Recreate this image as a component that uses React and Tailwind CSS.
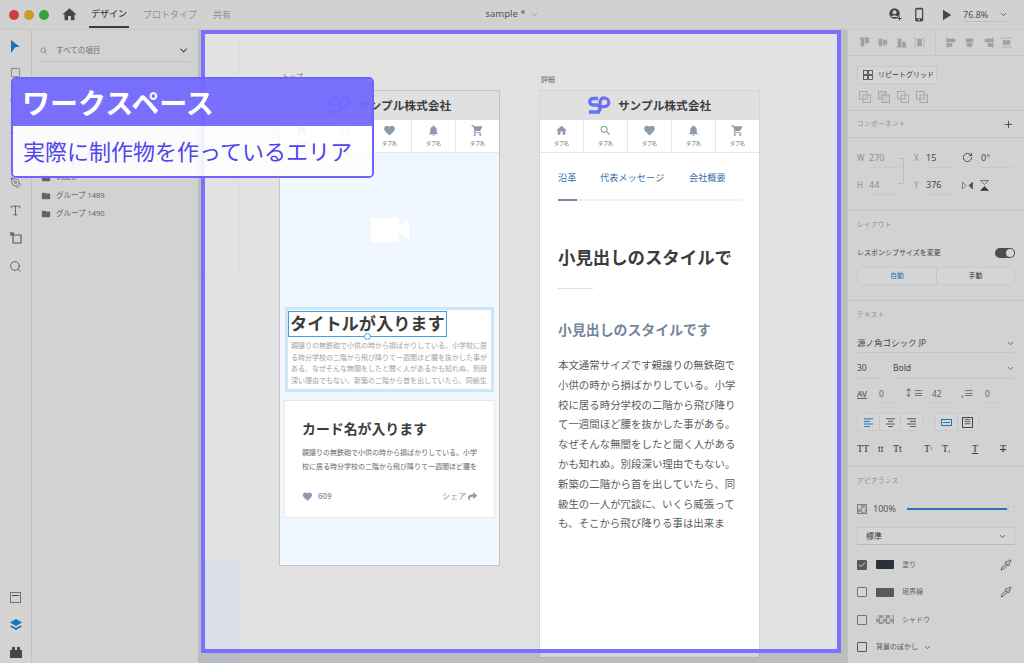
import { ChevronDown, Circle, Minus, PenTool, Plus, RotateCw, Search, Square, Triangle, Type, Pipette, Check } from "lucide-react";
import { MdFavorite, MdFolder, MdHome, MdNotifications, MdPhoneIphone, MdPlayArrow, MdSearch, MdShoppingCart } from "react-icons/md";
import { FaShare } from "react-icons/fa";

const tabIcons = [MdHome, MdSearch, MdFavorite, MdNotifications, MdShoppingCart];
const folders = ["繰り返しグリッド（カードのリスト）", "Video", "グループ 1489", "グループ 1490"];
const detailBody = [
  "本文通常サイズです親譲りの無鉄砲で",
  "小供の時から損ばかりしている。小学",
  "校に居る時分学校の二階から飛び降り",
  "て一週間ほど腰を抜かした事がある。",
  "なぜそんな無闇をしたと聞く人がある",
  "かも知れぬ。別段深い理由でもない。",
  "新築の二階から首を出していたら、同",
  "級生の一人が冗談に、いくら威張って",
  "も、そこから飛び降りる事は出来ま",
];

function Logo() {
  return (
    <svg width="23" height="19" viewBox="0 0 23 19" fill="none">
      <path d="M10 2.5H5a3 3 0 0 0 0 6.5h3.5a3 3 0 0 1 0 7H1" stroke="#5f78f2" strokeWidth="3.4" />
      <path d="M12 13V6a4 4 0 0 1 4.5-4a4.2 4.2 0 0 1 0 8.6H13" stroke="#6d6cf6" strokeWidth="3.2" />
      <path d="M9 17.5l3-2v2z" fill="#5f78f2" />
    </svg>
  );
}

function CompanyHeader() {
  return (
    <div className="h-[29px] bg-[#e0e0e0] flex items-center justify-center gap-[7px]">
      <Logo />
      <span className="text-[11.7px] font-bold text-[#3e3e3e]">サンプル株式会社</span>
    </div>
  );
}

function TabBar() {
  return (
    <div className="h-[33px] flex border-b border-[#e6e6e6]">
      {tabIcons.map((Icon, i) => (
        <div key={i} className="flex-1 flex flex-col items-center pt-[4px] border-r border-[#e6e6e6] last:border-r-0">
          <Icon size={13} className="text-[#8d9bae]" />
          <span className="text-[5px] leading-[8px] mt-[2px] text-[#666]">タブ名</span>
        </div>
      ))}
    </div>
  );
}

function AlignIcon({ kind }) {
  const shapes = {
    top: <><path d="M0 1h11" /><rect x="2" y="1" width="3" height="8" /><rect x="6.5" y="1" width="3" height="5" /></>,
    middle: <><path d="M0 5.5h11" /><rect x="2" y="2" width="3" height="7" /><rect x="6.5" y="3" width="3" height="5" /></>,
    bottom: <><path d="M0 10h11" /><rect x="2" y="2" width="3" height="8" /><rect x="6.5" y="5" width="3" height="5" /></>,
    dist: <><path d="M1 0v11M10 0v11" /><rect x="3.5" y="2" width="4" height="7" /></>,
    left: <><path d="M1 0v11" /><rect x="1" y="2" width="8" height="3" /><rect x="1" y="6.5" width="5" height="3" /></>,
    center: <><path d="M5.5 0v11" /><rect x="2" y="2" width="7" height="3" /><rect x="3" y="6.5" width="5" height="3" /></>,
    right: <><path d="M10 0v11" /><rect x="2" y="2" width="8" height="3" /><rect x="5" y="6.5" width="5" height="3" /></>,
    distv: <><path d="M0 1h11M0 10h11" /><rect x="2" y="3.5" width="7" height="4" /></>,
  };
  return (
    <svg width="11" height="11" viewBox="0 0 11 11" fill="#c0c0c0" stroke="#c0c0c0" strokeWidth="0.7">
      {shapes[kind]}
    </svg>
  );
}

function PathOp({ inner }) {
  return (
    <svg width="12" height="12" viewBox="0 0 12 12" fill={inner ? "#efefef" : "none"} stroke="#c8c8c8" strokeWidth="1">
      <rect x="0.5" y="0.5" width="7.5" height="7.5" />
      <rect x="4" y="4" width="7.5" height="7.5" />
    </svg>
  );
}

function TextAlign({ lines, color }) {
  return (
    <svg width="11" height="9" viewBox="0 0 11 9" stroke={color} strokeWidth="1">
      {lines.map(([a, b], i) => <path key={i} d={`M${a} ${i * 2.6 + 0.8}H${b}`} />)}
    </svg>
  );
}

function SectionTitle({ children }) {
  return <div className="text-[6.5px] tracking-[0.5px] leading-[10px] text-[#aaa]">{children}</div>;
}

function Checker({ className }) {
  return <div className={`bg-[repeating-conic-gradient(#b4b4b4_0%_25%,#ececec_0%_50%)] bg-[length:7px_7px] ${className}`} />;
}

function FillRow({ checked, color, label, dropper, checker }) {
  return (
    <div className="h-[27.5px] flex items-center">
      <div className={`w-[10px] h-[10px] rounded-[1px] border flex items-center justify-center ${checked ? "bg-[#6a6a6a] border-[#6a6a6a]" : "border-[#888]"}`}>
        {checked && <Check size={8} strokeWidth={3} className="text-white" />}
      </div>
      {checker ? <Checker className="w-[18px] h-[9px] ml-[9px]" /> : <div className={`w-[18px] h-[9px] ml-[9px] rounded-[1px] ${color}`} />}
      <span className="ml-[8px] text-[7px] text-[#777]">{label}</span>
      {dropper && <Pipette size={12} strokeWidth={1.6} className="ml-auto mr-[3px] text-[#444]" />}
    </div>
  );
}

function RightPanel() {
  return (
    <aside className="w-[177px] shrink-0 bg-[#fbfbfb] border-l border-[#e8e8e8] text-[#555]">
      <div className="h-[26px] flex items-center border-b border-[#ececec]">
        <div className="w-[88px] h-full flex items-center justify-between pl-[11px] pr-[10px] border-r border-[#ececec]">
          <AlignIcon kind="top" /><AlignIcon kind="middle" /><AlignIcon kind="bottom" /><AlignIcon kind="dist" />
        </div>
        <div className="flex-1 flex items-center justify-between pl-[10px] pr-[12px]">
          <AlignIcon kind="left" /><AlignIcon kind="center" /><AlignIcon kind="right" /><AlignIcon kind="distv" />
        </div>
      </div>

      <div className="h-[55px] pt-[10px] pl-[9px] border-b border-[#ececec]">
        <div className="w-[80px] h-[18px] flex items-center gap-[5px] pl-[5px] border border-[#f0f0f0] bg-[#fefefe]">
          <svg width="10" height="10" viewBox="0 0 10 10" fill="none" stroke="#555" strokeWidth="0.8">
            <rect x="0.5" y="0.5" width="4" height="4" /><rect x="5.5" y="0.5" width="4" height="4" />
            <rect x="0.5" y="5.5" width="4" height="4" /><rect x="5.5" y="5.5" width="4" height="4" />
          </svg>
          <span className="text-[7px] text-[#444]">リピートグリッド</span>
        </div>
        <div className="flex gap-[7px] mt-[7px] ml-[2px]">
          <PathOp /><PathOp inner /><PathOp /><PathOp />
        </div>
      </div>

      <div className="h-[27px] flex items-center justify-between pl-[9px] pr-[10px] border-b border-[#ececec]">
        <SectionTitle>コンポーネント</SectionTitle>
        <Plus size={11} className="text-[#555]" />
      </div>

      <div className="relative h-[73px] pl-[9px] pt-[12px] border-b border-[#ececec] text-[9px]">
        <div className="absolute left-[50px] top-[20px] w-[6px] h-[26px] border-t border-r border-b border-[#e2e2e2]" />
        <div className="h-[27px] flex items-start leading-[16px]">
          <span className="w-[12px] text-[#aaa] text-[8px]">W</span>
          <span className="w-[32px] text-[#aaa] border-b border-[#efefef] h-[18px]">270</span>
          <span className="w-[24px] pl-[13px] text-[#aaa] text-[8px]">X</span>
          <span className="w-[29px] pl-[1px] border-b border-[#efefef] h-[18px]">15</span>
          <RotateCw size={11} className="ml-[8px] mt-[2px] text-[#555]" />
          <span className="ml-[8px] w-[32px] border-b border-[#efefef] h-[18px]">0°</span>
        </div>
        <div className="h-[27px] flex items-start leading-[16px]">
          <span className="w-[12px] text-[#aaa] text-[8px]">H</span>
          <span className="w-[32px] text-[#aaa] border-b border-[#efefef] h-[18px]">44</span>
          <span className="w-[24px] pl-[13px] text-[#aaa] text-[8px]">Y</span>
          <span className="w-[29px] pl-[1px] border-b border-[#efefef] h-[18px]">376</span>
          <svg width="11" height="9" viewBox="0 0 11 9" className="ml-[8px] mt-[4px]" fill="#555" stroke="#555" strokeWidth="0.6">
            <path d="M0.5 1v7l3.5-3.5z" fill="none" /><path d="M10.5 1v7L7 4.5z" />
          </svg>
          <svg width="9" height="11" viewBox="0 0 9 11" className="ml-[7px] mt-[3px]" fill="#444" stroke="#444" strokeWidth="0.6">
            <path d="M0.5 0.5h8L4.5 4.5z" fill="none" /><path d="M0.5 10.5h8L4.5 6.5z" />
          </svg>
        </div>
      </div>

      <div className="h-[90px] pl-[9px] pr-[9px] pt-[9px] border-b border-[#ececec]">
        <SectionTitle>レイアウト</SectionTitle>
        <div className="h-[18px] mt-[14px] flex items-center justify-between">
          <span className="text-[7px] text-[#555]">レスポンシブサイズを変更</span>
          <div className="w-[20px] h-[10px] rounded-full bg-[#5c5c5c] flex justify-end items-center pr-[1px]">
            <div className="w-[8px] h-[8px] rounded-full bg-white" />
          </div>
        </div>
        <div className="h-[18px] mt-[5px] flex border border-[#f2f2f2] bg-[#fefefe] text-[7px]">
          <div className="w-[79px] flex items-center justify-center text-[#2b8fd6] border-r border-[#ececec]">自動</div>
          <div className="flex-1 flex items-center justify-center text-[#444]">手動</div>
        </div>
      </div>

      <div className="h-[166px] pl-[9px] pr-[9px] pt-[9px] border-b border-[#ececec]">
        <SectionTitle>テキスト</SectionTitle>
        <div className="h-[19px] mt-[14px] flex items-center justify-between border-b border-[#ececec] text-[8.5px]">
          <span>源ノ角ゴシック JP</span>
          <ChevronDown size={9} strokeWidth={2} />
        </div>
        <div className="h-[20px] mt-[6px] flex items-center text-[8.5px]">
          <span className="w-[27px] h-full border-b border-[#ececec] leading-[18px]">30</span>
          <div className="ml-[9px] flex-1 h-full flex items-center justify-between border-b border-[#ececec]">
            <span>Bold</span>
            <ChevronDown size={9} strokeWidth={2} />
          </div>
        </div>
        <div className="h-[20px] mt-[7px] flex items-start text-[8.5px] text-[#777]">
          <span className="w-[19px] text-[8px] leading-[13px] pt-[1px] font-semibold underline">AV</span>
          <span className="w-[22px] pl-[3px] border-b border-[#f0f0f0] h-[17px] leading-[16px]">0</span>
          <span className="w-[31px] text-center text-[10px] leading-[14px]">↕≡</span>
          <span className="w-[24px] pl-[3px] border-b border-[#f0f0f0] h-[17px] leading-[16px]">42</span>
          <span className="w-[29px] text-center text-[10px] leading-[14px]">,≡</span>
          <span className="w-[22px] pl-[3px] border-b border-[#f0f0f0] h-[17px] leading-[16px]">0</span>
        </div>
        <div className="h-[18px] mt-[7px] flex">
          <div className="w-[66px] flex border border-[#f2f2f2] rounded-[2px] bg-[#fefefe]">
            <div className="flex-1 flex items-center justify-center border-r border-[#ececec]"><TextAlign lines={[[1, 10], [1, 7], [1, 10], [1, 7]]} color="#2b8fd6" /></div>
            <div className="flex-1 flex items-center justify-center border-r border-[#ececec]"><TextAlign lines={[[1, 10], [3, 8], [1, 10], [3, 8]]} color="#666" /></div>
            <div className="flex-1 flex items-center justify-center"><TextAlign lines={[[1, 10], [4, 10], [1, 10], [4, 10]]} color="#666" /></div>
          </div>
          <div className="w-[44px] ml-[12px] flex border border-[#f2f2f2] rounded-[2px] bg-[#fefefe]">
            <div className="flex-1 flex items-center justify-center border-r border-[#ececec]">
              <div className="w-[11px] h-[7px] border border-[#2b8fd6] flex items-center justify-center"><div className="w-[7px] h-px bg-[#2b8fd6]" /></div>
            </div>
            <div className="flex-1 flex items-center justify-center">
              <div className="w-[11px] h-[11px] border border-[#555] flex items-center justify-center"><TextAlign lines={[[2, 9], [2, 9], [2, 9]]} color="#555" /></div>
            </div>
          </div>
        </div>
        <div className="h-[14px] mt-[11px] font-['Liberation_Serif',serif] text-[10px] leading-[14px] text-[#444]">
          <div className="flex">
            <span className="w-[21px]">TT</span>
            <span className="w-[15px]">tt</span>
            <span className="w-[31px]">Tt</span>
            <span className="w-[18px]">T<sup className="text-[5px]">1</sup></span>
            <span className="w-[30px]">T<sub className="text-[5px]">1</sub></span>
            <span className="w-[28px] underline">T</span>
            <span className="line-through">T</span>
          </div>
        </div>
      </div>

      <div className="pl-[9px] pr-[9px] pt-[9px]">
        <SectionTitle>アピアランス</SectionTitle>
        <div className="h-[18px] mt-[14px] flex items-center">
          <Checker className="w-[10px] h-[10px] border border-[#999]" />
          <span className="ml-[6px] text-[9px] w-[28px] text-[#666]">100%</span>
          <div className="ml-[6px] w-[100px] h-[2px] bg-[#3b82dc]" />
          <div className="w-[8px] h-[8px] rounded-full bg-white border border-[#eee]" />
        </div>
        <div className="h-[18px] mt-[9px] flex items-center justify-between px-[8px] pr-[7px] bg-[#fefefe] border border-[#efefef] border-b-[#dcdcdc] text-[8px] text-[#444]">
          <span>標準</span>
          <ChevronDown size={9} strokeWidth={2} />
        </div>
        <div className="mt-[6px]">
          <FillRow checked color="bg-[#353c42]" label="塗り" dropper />
          <FillRow color="bg-[#6a6a6a]" label="境界線" dropper />
          <FillRow checker label="シャドウ" />
          <div className="h-[27px] flex items-center">
            <div className="w-[10px] h-[10px] rounded-[1px] border border-[#666]" />
            <span className="ml-[9px] text-[7px] text-[#666]">背景のぼかし</span>
            <ChevronDown size={9} strokeWidth={2} className="ml-[5px]" />
          </div>
        </div>
      </div>
    </aside>
  );
}

function PhoneTop() {
  return (
    <div className="absolute left-[81px] top-[60px] w-[221px] h-[476px] bg-white border border-[#c4c4c4] flex flex-col">
      <CompanyHeader />
      <TabBar />
      <div className="flex-1 bg-[#f0f7fe] relative">
        <div className="h-[154px] flex items-center justify-center">
          <svg width="38" height="24" viewBox="0 0 38 24" fill="white">
            <rect x="0" y="0" width="28" height="24" rx="1.5" />
            <path d="M28 9L38 2V22L28 15z" />
          </svg>
        </div>
        <div className="ml-[5px] w-[209px] h-[85px] bg-white border-[3px] border-[#cde6f8] overflow-hidden pl-[3px] pt-[30px]">
          <div className="text-[7px] leading-[11.7px] text-[#a2a2a2] whitespace-nowrap">
            <div>親譲りの無鉄砲で小供の時から損ばかりしている。小学校に居</div>
            <div>る時分学校の二階から飛び降りて一週間ほど腰を抜かした事が</div>
            <div>ある。なぜそんな無闇をしたと聞く人があるかも知れぬ。別段</div>
            <div>深い理由でもない。新築の二階から首を出していたら、同級生</div>
          </div>
        </div>
        <div className="absolute left-[8px] top-[158px] w-[159px] h-[26px] border border-[#3fa0ea] flex items-center pl-[1px]">
          <span className="text-[17.2px] font-bold leading-none text-[#3c3c3c] whitespace-nowrap">タイトルが入ります</span>
          <div className="absolute left-[75px] -bottom-[4px] w-[7px] h-[7px] rounded-full bg-white border border-[#3fa0ea]" />
        </div>
        <div className="mt-[8px] ml-[4px] w-[211px] h-[118px] bg-white border border-[#e8e8e8] pl-[17px] pr-[17px] pt-[18px]">
          <div className="text-[13.9px] font-bold leading-[20px] text-[#3c3c3c]">カード名が入ります</div>
          <div className="mt-[7px] text-[7px] leading-[14px] text-[#666] whitespace-nowrap">
            <div>親譲りの無鉄砲で小供の時から損ばかりしている。小学</div>
            <div>校に居る時分学校の二階から飛び降りて一週間ほど腰を</div>
          </div>
          <div className="mt-[16px] flex items-center justify-between text-[#8c9ab0]">
            <div className="flex items-center gap-[5px]">
              <MdFavorite size={11} />
              <span className="text-[8px] font-semibold">609</span>
            </div>
            <div className="flex items-center gap-[2px]">
              <span className="text-[8px]">シェア</span>
              <FaShare size={9} />
            </div>
          </div>
        </div>
      </div>
    </div>
  );
}

function PhoneDetail() {
  return (
    <div className="absolute left-[341px] top-[60px] w-[221px] h-[568px] bg-white border border-[#d4d4d4] flex flex-col">
      <CompanyHeader />
      <TabBar />
      <div className="pl-[18px] pr-[17px]">
        <div className="flex text-[9.2px] leading-[14px] text-[#3a6ea8] pt-[18px]">
          <span className="w-[42px]">沿革</span>
          <span className="w-[89px]">代表メッセージ</span>
          <span>会社概要</span>
        </div>
        <div className="mt-[14px] h-[2px] bg-[#eef2f6]">
          <div className="w-[19px] h-[2px] bg-[#7b8a9a]" />
        </div>
        <h2 className="mt-[42px] text-[17.4px] leading-[28px] font-bold text-[#3c3c3c] whitespace-nowrap">小見出しのスタイルで</h2>
        <div className="mt-[17px] w-[35px] h-px bg-[#d9e2ec]" />
        <h3 className="mt-[31px] text-[13.9px] leading-[20px] font-bold text-[#76869a] whitespace-nowrap">小見出しのスタイルです</h3>
        <div className="mt-[16px] text-[10.45px] leading-[19.8px] text-[#5c5c5c] whitespace-nowrap">
          {detailBody.map((line) => <div key={line}>{line}</div>)}
        </div>
      </div>
    </div>
  );
}

export default function App() {
  return (
    <div className="relative w-[1024px] h-[663px] overflow-hidden bg-[#fbfbfb] font-['Noto_Sans','Noto_Sans_CJK_JP',sans-serif]" lang="ja">
      <header className="h-[30px] grid grid-cols-[1fr_auto_1fr] items-center bg-[#fafafa] border-b border-[#ececec] text-[#555]">
        <div className="h-full flex items-center">
          <div className="flex items-center gap-[5px] pl-[9px]">
            <div className="w-[10px] h-[10px] rounded-full bg-[#ef4f4c]" />
            <div className="w-[10px] h-[10px] rounded-full bg-[#f7b731]" />
            <div className="w-[10px] h-[10px] rounded-full bg-[#3dc14e]" />
          </div>
          <MdHome size={17} className="ml-[12px] text-[#555]" />
          <div className="ml-[11px] h-[27px] flex items-center border-b-2 border-[#444] w-[40px] justify-center text-[9px] font-medium text-[#555]">デザイン</div>
          <span className="ml-[14px] text-[9px] text-[#aaa]">プロトタイプ</span>
          <span className="ml-[16px] text-[9px] text-[#aaa]">共有</span>
        </div>
        <div className="flex items-center gap-[4px] text-[9.5px] text-[#666]">
          <span>sample *</span>
          <ChevronDown size={9} className="text-[#aaa]" />
        </div>
        <div className="h-full flex items-center justify-end pr-[16px]">
          <svg width="13" height="13" viewBox="0 0 13 13" fill="#555">
            <circle cx="5.5" cy="5.5" r="5.2" />
            <circle cx="5.5" cy="4.2" r="2" fill="#f4f4f4" />
            <path d="M2 9c.6-2 6.4-2 7 0z" fill="#f4f4f4" />
            <path d="M10.5 8.5v4M8.5 10.5h4" stroke="#555" strokeWidth="1" />
          </svg>
          <MdPhoneIphone size={15} className="ml-[10px] text-[#555]" />
          <MdPlayArrow size={18} className="ml-[10px] text-[#555]" />
          <div className="ml-[8px] w-[45px] h-[14px] mt-[1px] border-b border-[#e4e4e4] flex items-center justify-between text-[9px] text-[#666]">
            <span>76.8%</span>
            <ChevronDown size={9} strokeWidth={2} className="text-[#555]" />
          </div>
        </div>
      </header>

      <div className="flex h-[633px]">
        <nav className="w-[32px] shrink-0 bg-[#fcfcfc] border-r border-[#e8e8e8] flex flex-col items-center pt-[10px] text-[#666]">
          <svg width="9" height="13" viewBox="0 0 9 13" className="mb-[14px]" fill="#1d8bdd"><path d="M0 0l9 7H5l-1 .5L0 13z" /></svg>
          <Square size={11} className="mb-[17px]" strokeWidth={1.3} />
          <Circle size={11} className="mb-[18px]" strokeWidth={1.3} />
          <Triangle size={11} className="mb-[16px]" strokeWidth={1.3} />
          <Minus size={11} className="mb-[15px] -rotate-45" strokeWidth={1.3} />
          <PenTool size={12} className="mb-[15px]" strokeWidth={1.3} />
          <Type size={13} className="mb-[14px]" strokeWidth={1.6} />
          <svg width="14" height="14" viewBox="0 0 14 14" className="mb-[15px]" fill="none" stroke="#666" strokeWidth="1.1"><path d="M1 1l3 3M4 4h8v8H4zM4 1v3M1 4h3" /></svg>
          <Search size={13} strokeWidth={1.6} />
          <div className="mt-auto flex flex-col items-center pb-[2px]">
            <div className="w-[11px] h-[11px] border border-[#888] flex justify-center pt-[2px] mb-[16px]"><div className="w-[7px] h-px bg-[#555]" /></div>
            <svg width="12" height="12" viewBox="0 0 12 12" fill="#1d8bdd" className="mb-[16px]"><path d="M6 0l6 3.5L6 7 0 3.5z" /><path d="M1.5 6.5L6 9l4.5-2.5L12 7.5 6 11 0 7.5z" /></svg>
            <svg width="12" height="11" viewBox="0 0 12 11" fill="#555" className="mb-[3px]"><path d="M0 3h2V0h3v3h2V0h3v3h2v8H0z" /></svg>
          </div>
        </nav>

        <aside className="w-[166px] shrink-0 bg-[#fbfbfb] px-[8px] text-[#666]">
          <div className="h-[32px] flex items-center border-b border-[#e6e6e6] pt-[10px]">
            <Search size={7} strokeWidth={2} className="text-[#777]" />
            <span className="ml-[9px] text-[7.5px] text-[#888]">すべての項目</span>
            <ChevronDown size={11} strokeWidth={2.4} className="ml-auto mr-[1px] text-[#555]" />
          </div>
          <div className="mt-[89px] pl-[1px]">
            {folders.map((name, i) => (
              <div key={name} className="h-[18px] flex items-center gap-[3px] text-[7.5px] text-[#777]">
                <MdFolder size={10} className="text-[#777] shrink-0" />
                <span className={`ml-[2px] ${i === 0 ? "pl-[14px]" : ""}`}>{name}</span>
              </div>
            ))}
          </div>
        </aside>

        <main className="relative flex-1 bg-[#e2e2e2] overflow-hidden">
          <div className="absolute left-0 top-[-20px] w-[42px] h-[269px] border border-[#dcdcdc]" />
          <div className="absolute left-0 top-[530px] w-[41px] h-[110px] bg-[#dbe0e8]" />
          <span className="absolute left-[84px] top-[42px] text-[7px] text-[#666]">トップ</span>
          <span className="absolute left-[343px] top-[45px] text-[7px] text-[#666]">詳細</span>
          <PhoneTop />
          <PhoneDetail />
        </main>

        <RightPanel />
      </div>

      <div className="absolute left-[201px] top-[30px] w-[640px] h-[623px] border-4 border-[#7b70ff] shadow-[0_0_0_1200px_rgba(0,0,0,0.16)] pointer-events-none" />

      <div className="absolute left-[11px] top-[77px] w-[363px] h-[101px] rounded-[5px] border-2 border-[#6f63ff] overflow-hidden">
        <div className="h-[47px] bg-[#7469ff]/95 pl-[9px] flex items-center text-[28px] font-bold text-white leading-none">ワークスペース</div>
        <div className="h-[50px] bg-white/90 pl-[10px] flex items-center text-[22px] text-[#4f45ee] leading-none whitespace-nowrap">実際に制作物を作っているエリア</div>
      </div>
    </div>
  );
}
